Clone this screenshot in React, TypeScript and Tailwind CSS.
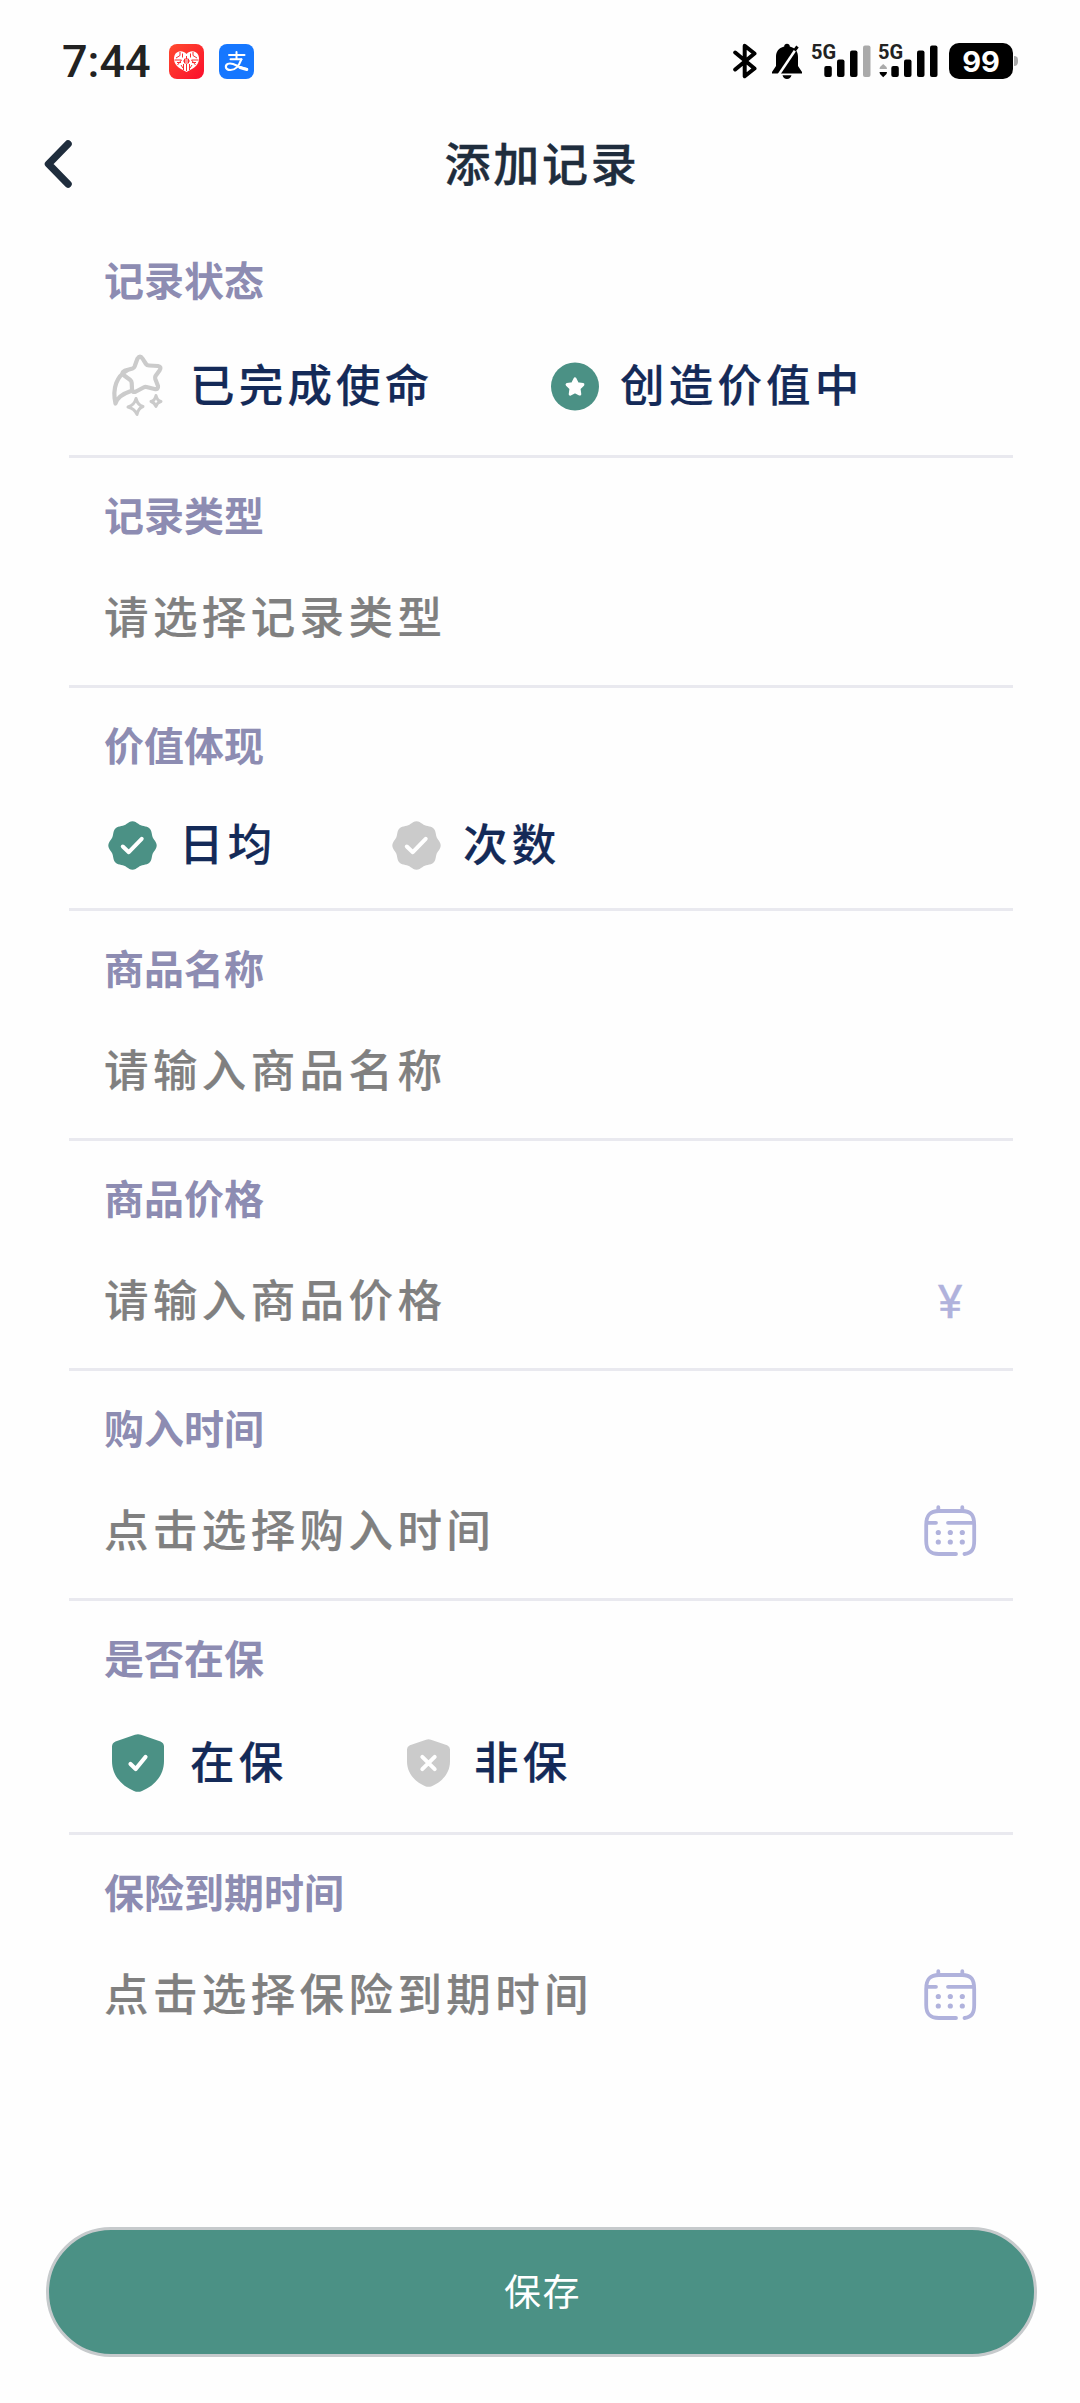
import type { ReactNode } from "react";

const CalendarIcon = () => (
   <svg className="w-[54px] h-[54px] mr-px" viewBox="0 0 54 54" fill="none" stroke="#b0b2dc" strokeWidth="3.8" strokeLinecap="round">
      <path d="M15.3 3.2v4M39.3 3.2v4" />
      <path d="M33 50H16C6.500 50 3.200 46 3.200 37V21C3.200 11 7 7 16 7H39C48 7 51.200 11 51.200 21V37C51.200 45 49 49 41.500 50" />
      <path d="M4 18.800h9M25 18.800h25" />
      <g fill="#b0b2dc" stroke="none">
         <circle cx="15.3" cy="28.5" r="2.6" />
         <circle cx="27.3" cy="28.5" r="2.6" />
         <circle cx="39.3" cy="28.5" r="2.6" />
         <circle cx="15.3" cy="38" r="2.6" />
         <circle cx="27.3" cy="38" r="2.6" />
         <circle cx="39.3" cy="38" r="2.6" />
      </g>
   </svg>
);

const ShootingStarIcon = () => (
   <svg className="w-[56px] h-[66px] shrink-0" viewBox="0 0 56 66" fill="none" stroke="#cbcbcb" strokeWidth="4.2" strokeLinecap="round" strokeLinejoin="round">
      <path d="M27.500 5.500Q30 1.500 32.500 5.500L36 11Q37 12.500 39 12.500L48 13Q52 13.800 49.500 17.500L45.500 23Q44.800 24.500 45.300 26L48 33Q48.500 37 44.500 36L36.500 34Q35 33.700 33.500 34.500L26 38.500Q22 40 22 36L21.700 30Q21.500 28 20.300 27L13.500 22Q11 19.500 14.500 17.800L22.500 15.500Q24 15 24.600 13.500Z" />
      <path d="M17 17.500C7 23 2 35 5.500 50.500C7 45 12 41 21 38" />
      <path strokeWidth="3" d="M26 45.500Q28 52.500 33 53.500Q28 55.500 27 61.500Q24.500 55.500 18 54Q24.500 52 26 45.500Z" />
      <path strokeWidth="3" d="M46 42.500Q47 47.500 51 48.500Q47 49.500 46 53.500Q44.500 49.500 41 48.500Q45 47.500 46 42.500Z" />
   </svg>
);

const StarCircleIcon = () => (
   <svg className="w-12 h-[49px] shrink-0" viewBox="0 0 48 48">
      <circle cx="24" cy="24" r="24" fill="#4b9185" />
      <path fill="#fff" stroke="#fff" strokeWidth="3" strokeLinejoin="round" d="M24 16.300l2.400 4.900 5.500.9-3.900 3.900.8 5.600-4.800-2.400-4.800 2.400.8-5.600-3.900-3.900 5.500-.9z" />
   </svg>
);

// badge outline with eight soft lobes
const badgePoints = Array.from({ length: 96 }, (_, i) => {
   const a = (i / 96) * Math.PI * 2;
   const r = 23 + 1.2 * Math.cos(8 * a);
   return `${(24.5 + r * Math.cos(a)).toFixed(2)},${(24.5 + r * Math.sin(a)).toFixed(2)}`;
}).join(" ");

const BadgeIcon = ({ color }: { color: string }) => (
   <svg className="w-[49px] h-[49px] shrink-0" viewBox="0 0 49 49">
      <polygon points={badgePoints} fill={color} />
      <path d="M14.800 25.500l6 5.700L33.700 17.800" fill="none" stroke="#fff" strokeWidth="4" strokeLinecap="round" strokeLinejoin="round" />
   </svg>
);

const ShieldIcon = ({ color, className, children }: { color: string; className: string; children: ReactNode }) => (
   <svg className={`shrink-0 ${className}`} viewBox="0 0 52 58">
      <path fill={color} d="M23 .8Q26 -.3 29 .8L48.500 7.500Q52 9 52 12.500V27C52 42 42 52 30 57Q26 58.700 22 57C10 52 0 42 0 27V12.500Q0 9 3.500 7.500Z" />
      {children}
   </svg>
);

const StatusBar = () => (
   <div className="h-[122px] pl-[62px] pr-[62px] flex items-center justify-between">
      <div className="flex items-center">
         <span className="w-[107px] font-[Roboto] font-medium text-[45px] leading-none text-[#222]">7:44</span>
         <svg className="w-[35px] h-[35px] mr-[15px]" viewBox="0 0 35 35">
            <defs>
               <linearGradient id="red" x1="0" y1="0" x2="1" y2="1">
                  <stop offset="0" stopColor="#ff4b2e" />
                  <stop offset="1" stopColor="#fb0d2c" />
               </linearGradient>
            </defs>
            <rect width="35" height="35" rx="8" fill="url(#red)" />
            <path fill="#fff" d="M17.500 10C14 6 8 6.500 5.700 11C3 18 8 23 13 25.500L17.500 28L22 25.500C27 23 32 18 29.300 11C27 6.500 21 6 17.500 10Z" />
            <path fill="none" stroke="#fb2a30" strokeWidth="1" d="M11 8v3.500L7 14M13.500 9.500v4M5.500 16h7l-4 5M8 18.500h4M24 8v3.500l4 2.500M21.500 9.500v4M29.500 16h-7l4 5M27 18.500h-4M15.500 15v4h4v-4zM17.500 12v3M12 21l2 3M14.500 20v6M17.500 20v7M20.500 20v6M23 21l-2 3M14 17h7" />
         </svg>
         <svg className="w-[35px] h-[35px]" viewBox="0 0 35 35" fill="none" stroke="#fff" strokeLinecap="round" strokeLinejoin="round">
            <rect width="35" height="35" rx="8" fill="#1677ff" stroke="none" />
            <path strokeWidth="2" d="M10 11h15.500M17.500 8v6M11.500 15.200h11" />
            <path strokeWidth="2.200" d="M22.300 15.500C20.500 20.500 17 26 11.500 26C5.500 26 5.500 19.800 10.500 19.500C16 19 20 24.500 28 25" />
            <path strokeWidth="3" d="M21 23.500L27.800 25.500" />
         </svg>
      </div>
      <div className="flex items-center">
         <svg className="w-6 h-9 mr-[15px]" viewBox="0 0 24 36" fill="none" stroke="#000" strokeWidth="4" strokeLinecap="round" strokeLinejoin="round">
            <path d="M2.200 9.500L21.500 25.500L11.700 33.200V2.800L21.500 10.500L2.200 26.500" />
         </svg>
         <svg className="w-[30px] h-9 mr-2" viewBox="0 0 30 36">
            <path d="M15 0.800c1.700 0 2.800 1 2.800 2.800C23.500 5 26 9 26 14v9l4 6v1.500H0V29l4-6v-9C4 9 6.500 5 12.200 3.600C12.200 1.800 13.300.8 15 .8ZM10.500 32.300h9C19 34.700 17.300 36 15 36s-4-1.300-4.500-3.700Z" />
            <path d="M24 6L6.500 32" stroke="#fefefe" strokeWidth="2.500" />
            <path d="M25.500 3.500L22.500 7.500" stroke="#000" strokeWidth="3" />
         </svg>
         <svg className="w-[62px] h-[50px] mr-[5px]" viewBox="-1 -8 62 50">
            <text x="0" y="15" fontFamily="Roboto" fontWeight="700" fontSize="20" fill="#222">5G</text>
            <rect x="13.300" y="22" width="7.500" height="11" rx="2" />
            <rect x="26" y="15.500" width="7.500" height="17.500" rx="2" />
            <rect x="39" y="6.500" width="7.500" height="26.500" rx="2" />
            <rect x="52" y="1.500" width="7.500" height="31.500" rx="2" fill="#aaa" />
         </svg>
         <svg className="w-[62px] h-[50px] mr-[10px]" viewBox="-1 -8 62 50">
            <text x="0" y="15" fontFamily="Roboto" fontWeight="700" fontSize="20" fill="#222">5G</text>
            <path fill="#aaa" d="M1.500 25L2 23L5.200 20L8.500 23L9 25Z" />
            <path d="M1.500 28H9L8.500 30L5.200 33.300L2 30Z" />
            <rect x="13.300" y="22" width="7.500" height="11" rx="2" />
            <rect x="26" y="15.500" width="7.500" height="17.500" rx="2" />
            <rect x="39" y="6.500" width="7.500" height="26.500" rx="2" />
            <rect x="52" y="1.500" width="7.500" height="31.500" rx="2" />
         </svg>
         <div className="w-16 h-9 rounded-[10px] bg-black flex items-center justify-center font-[Inter] font-bold text-[29px] leading-none text-white">99</div>
         <div className="w-1 h-[10px] ml-px rounded-r-full bg-[#aaa]"></div>
      </div>
   </div>
);

const Section = ({ label, className, children }: { label: string; className: string; children: ReactNode }) => (
   <section className={`ml-[69px] mr-[67px] pt-[26px] pl-[35px] pr-[35px] ${className}`}>
      <h2 className="h-[60px] leading-[60px] text-[40px] font-bold text-[#8d8cb2]">{label}</h2>
      {children}
   </section>
);

const line = "border-b-[3px] border-[#e9e9ef]";

const Field = ({ placeholder, children }: { placeholder: string; children?: ReactNode }) => (
   <div className="mt-[34px] h-20 flex items-center justify-between">
      <span className="pb-[6px] text-[44.5px] leading-none tracking-[4.4px] font-medium text-[#808080] [-webkit-text-stroke:0.2px]">{placeholder}</span>
      {children}
   </div>
);

const optionText = "pb-[6px] text-[44.5px] leading-none tracking-[4.2px] font-medium text-[#142a58] whitespace-nowrap [-webkit-text-stroke:0.2px]";

export default function App() {
   return (
      <main className="w-[1080px] h-[2403px] flex flex-col bg-[#fefefe] font-['Noto_Sans_CJK_SC',sans-serif]">
         <StatusBar />

         {/* title bar */}
         <header className="h-[101px] pb-[18px] px-[44px] flex items-center">
            <svg className="w-7 h-12" viewBox="0 0 28 48" fill="none" stroke="#1f2d3d" strokeWidth="7.500" strokeLinecap="round" strokeLinejoin="round">
               <path d="M24 4L4.500 24L24 44" />
            </svg>
            <h1 className="flex-1 pr-[24px] pb-[6px] text-center text-[46px] leading-none tracking-[2.700px] font-medium text-[#1f2d3d] [-webkit-text-stroke:0.4px]">添加记录</h1>
         </header>

         <Section label="记录状态" className={`h-[235px] ${line}`}>
            <div className="mt-[37px] h-20 pl-1.5 flex items-center">
               <div className="w-[441px] flex items-center gap-6">
                  <ShootingStarIcon />
                  <span className={optionText}>已完成使命</span>
               </div>
               <div className="flex items-center gap-[21px]">
                  <StarCircleIcon />
                  <span className={optionText}>创造价值中</span>
               </div>
            </div>
         </Section>

         <Section label="记录类型" className={`h-[230px] ${line}`}>
            <Field placeholder="请选择记录类型" />
         </Section>

         <Section label="价值体现" className={`h-[223px] ${line}`}>
            <div className="mt-[31px] h-20 pl-1 flex items-center">
               <div className="w-[284px] flex items-center gap-[22px]">
                  <BadgeIcon color="#4b9185" />
                  <span className={optionText}>日均</span>
               </div>
               <div className="flex items-center gap-[22px]">
                  <BadgeIcon color="#cbcbcb" />
                  <span className={optionText}>次数</span>
               </div>
            </div>
         </Section>

         <Section label="商品名称" className={`h-[230px] ${line}`}>
            <Field placeholder="请输入商品名称" />
         </Section>

         <Section label="商品价格" className={`h-[230px] ${line}`}>
            <Field placeholder="请输入商品价格">
               <span className="w-[54px] mr-px text-center font-[Roboto] text-[47px] leading-none text-[#b0b2dc] [-webkit-text-stroke:0.3px]">¥</span>
            </Field>
         </Section>

         <Section label="购入时间" className={`h-[230px] ${line}`}>
            <Field placeholder="点击选择购入时间">
               <CalendarIcon />
            </Field>
         </Section>

         <Section label="是否在保" className={`h-[234px] ${line}`}>
            <div className="mt-[36px] h-20 pl-2 flex items-center">
               <div className="w-[295px] flex items-center gap-[26px]">
                  <ShieldIcon color="#4b9185" className="w-[52px] h-[58px]">
                     <path d="M18.500 30l5.200 5L33.500 23" fill="none" stroke="#fff" strokeWidth="4.200" strokeLinecap="round" strokeLinejoin="round" />
                  </ShieldIcon>
                  <span className={optionText}>在保</span>
               </div>
               <div className="flex items-center gap-6">
                  <ShieldIcon color="#cbcbcb" className="w-[43px] h-12">
                     <path d="M18.500 21.500l15 15M33.500 21.500l-15 15" fill="none" stroke="#fff" strokeWidth="4.800" strokeLinecap="round" />
                  </ShieldIcon>
                  <span className={optionText}>非保</span>
               </div>
            </div>
         </Section>

         <Section label="保险到期时间" className="h-[230px]">
            <Field placeholder="点击选择保险到期时间">
               <CalendarIcon />
            </Field>
         </Section>

         <button className="mt-auto mb-[46px] ml-[46px] w-[991px] h-[130px] pb-1 pl-0.5 rounded-full border-[3px] border-[#c6cacc] bg-[#4b9185] text-[37px] leading-none tracking-[1.500px] text-white">
            保存
         </button>
      </main>
   );
}
